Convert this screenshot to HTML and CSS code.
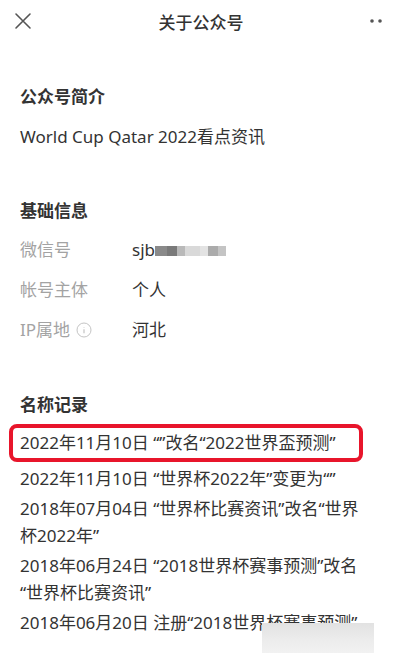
FILE: index.html
```html
<!DOCTYPE html>
<html lang="zh-CN">
<head>
<meta charset="utf-8">
<title>关于公众号</title>
<link rel="stylesheet" href="styles.css">
</head>
<body>
<div class="page">
  <header class="topbar">
    <svg class="close" width="18" height="18" viewBox="0 0 18 18"><path d="M2 2L16 16M16 2L2 16" stroke="#555" stroke-width="1.6" stroke-linecap="round"/></svg>
    <div class="title">关于公众号</div>
    <svg class="more" width="14" height="6" viewBox="0 0 14 6"><circle cx="2" cy="3" r="1.8" fill="#555"/><circle cx="10" cy="3" r="1.8" fill="#555"/></svg>
  </header>

  <section class="sec sec-intro">
    <h2 class="heading">公众号简介</h2>
    <p class="desc">World Cup Qatar 2022看点资讯</p>
  </section>

  <section class="sec sec-basic">
    <h2 class="heading">基础信息</h2>
    <div class="rows">
      <div class="row"><span class="label">微信号</span><span class="value">sjb<span class="mosaic"><i class="m1"></i><i class="m2"></i><i class="m3"></i><i class="m4"></i><i class="m5"></i><i class="m6"></i><i class="m7"></i></span></span></div>
      <div class="row"><span class="label">帐号主体</span><span class="value">个人</span></div>
      <div class="row"><span class="label">IP属地<svg class="info" width="16" height="16" viewBox="0 0 16 16"><circle cx="8" cy="8" r="7" fill="none" stroke="#c4c4c4" stroke-width="1"/><path d="M8 5V5.6M8 7.2V11.2" stroke="#c4c4c4" stroke-width="1.2"/></svg></span><span class="value">河北</span></div>
    </div>
  </section>

  <section class="sec sec-names">
    <h2 class="heading">名称记录</h2>
    <ul class="records">
      <li class="rec rec-hl">2022年11月10日 “”改名“2022世界盃预测”</li>
      <li class="rec">2022年11月10日 “世界杯2022年”变更为“”</li>
      <li class="rec">2018年07月04日 “世界杯比赛资讯”改名“世界杯2022年”</li>
      <li class="rec">2018年06月24日 “2018世界杯赛事预测”改名“世界杯比赛资讯”</li>
      <li class="rec">2018年06月20日 注册“2018世界杯赛事预测”</li>
    </ul>
  </section>
  <div class="watermark"></div>
</div>
</body>
</html>
```

FILE: styles.css
```css
html, body {
  margin: 0;
  padding: 0;
  background: #fff;
}
body {
  font-family: "Noto Sans", "Noto Sans CJK SC", sans-serif;
  color: #333;
}
.page {
  position: relative;
  width: 400px;
  height: 653px;
  overflow: hidden;
}
.topbar {
  height: 42px;
  display: flex;
  align-items: center;
  justify-content: space-between;
  padding: 0 14px 0 14px;
}
.title {
  font-size: 17px;
  font-weight: 500;
  color: #333;
}
.more { margin-right: 2px; }
.sec {
  padding: 0 28px 0 20px;
}
.heading {
  margin: 0;
  font-size: 17px;
  font-weight: 700;
  line-height: 24px;
  color: #333;
}
.sec-intro { margin-top: 43px; }
.desc {
  margin: 16px 0 0;
  font-size: 17px;
  line-height: 24px;
}
.sec-basic { margin-top: 50px; }
.rows {
  margin-top: 15px;
  display: flex;
  flex-direction: column;
  gap: 16px;
}
.row {
  display: flex;
  align-items: center;
  font-size: 17px;
  line-height: 24px;
}
.label {
  width: 112px;
  color: #a3a3a3;
  display: flex;
  align-items: center;
}
.info { margin-left: 6px; }
.value {
  color: #333;
  display: flex;
  align-items: center;
}
.mosaic {
  display: flex;
  height: 10px;
  margin-top: 2px;
}
.mosaic i { display: block; height: 10px; }
.m1 { width: 12px; background: #8a8a8a; }
.m2 { width: 10px; background: #7a7a7a; }
.m3 { width: 8px; background: #b9b9b9; }
.m4 { width: 15px; background: #d9d9d9; }
.m5 { width: 8px; background: #e3e3e3; }
.m6 { width: 10px; background: #ababab; }
.m7 { width: 8px; background: #c4c4c4; }
.sec-names { margin-top: 51px; }
.records {
  list-style: none;
  margin: 7px 0 0;
  padding: 0;
  display: flex;
  flex-direction: column;
  gap: 3px;
}
.rec {
  font-size: 17px;
  line-height: 27px;
}
.rec-hl {
  margin-left: -11px;
  width: 332px;
  padding: 2px 7px;
  line-height: 26px;
  border: 4px solid #e8152b;
  border-radius: 8px;
  white-space: nowrap;
}
.watermark {
  position: absolute;
  left: 262px;
  top: 623px;
  width: 112px;
  height: 34px;
  background: linear-gradient(180deg, #e2e2e2 0%, #ececec 50%, #f3f3f3 100%);
}
```
